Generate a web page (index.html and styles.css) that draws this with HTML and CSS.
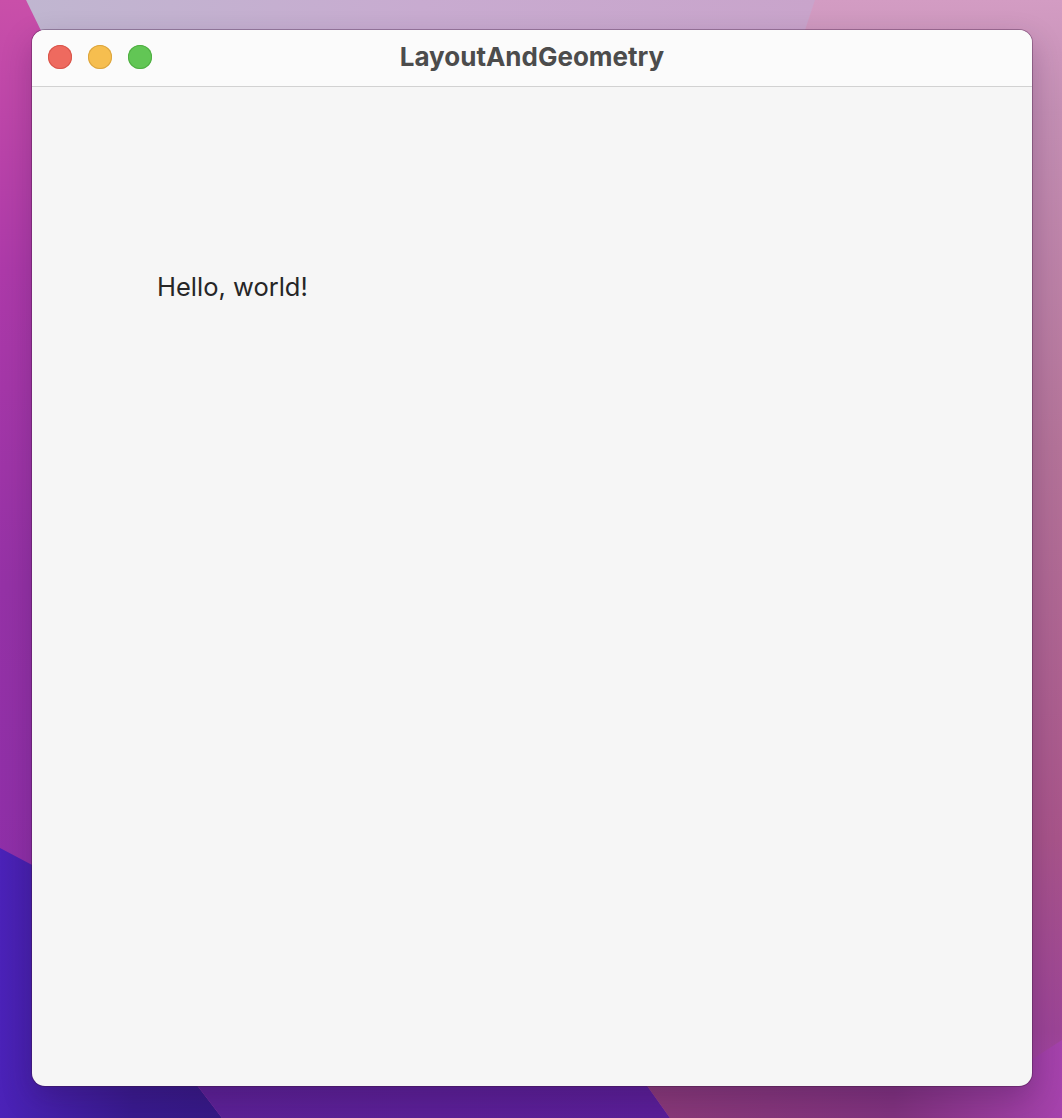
FILE: index.html
```html
<!DOCTYPE html>
<html lang="en">
<head>
<meta charset="utf-8">
<title>LayoutAndGeometry</title>
<link rel="stylesheet" href="styles.css">
</head>
<body>
<div class="desktop">
  <svg class="wallpaper" viewBox="0 0 1062 1118" width="1062" height="1118" aria-hidden="true">
    <defs>
      <linearGradient id="gBase" x1="0" y1="0" x2="0" y2="1">
        <stop offset="0" stop-color="#d39cc3"/>
        <stop offset="0.1" stop-color="#c48fb4"/>
        <stop offset="0.4" stop-color="#b47399"/>
        <stop offset="0.75" stop-color="#a8548a"/>
        <stop offset="0.92" stop-color="#9c4496"/>
        <stop offset="1" stop-color="#a642ab"/>
      </linearGradient>
      <linearGradient id="gTop" x1="0" y1="0" x2="1" y2="0">
        <stop offset="0" stop-color="#c0b6d0"/>
        <stop offset="0.5" stop-color="#c8abd0"/>
        <stop offset="1" stop-color="#c9a4cb"/>
      </linearGradient>
      <linearGradient id="gLeft" x1="0" y1="0" x2="0" y2="1">
        <stop offset="0" stop-color="#c94fa9"/>
        <stop offset="0.3" stop-color="#ad3aa9"/>
        <stop offset="0.65" stop-color="#9532a6"/>
        <stop offset="1" stop-color="#8e2fa8"/>
      </linearGradient>
      <linearGradient id="gIndigo" x1="0" y1="0" x2="1" y2="0">
        <stop offset="0" stop-color="#4b22b8"/>
        <stop offset="0.6" stop-color="#381a8e"/>
        <stop offset="1" stop-color="#351985"/>
      </linearGradient>
      <linearGradient id="gMid" x1="0" y1="0" x2="1" y2="0">
        <stop offset="0" stop-color="#5c2196"/>
        <stop offset="1" stop-color="#5a1e98"/>
      </linearGradient>
      <linearGradient id="gRightBottom" x1="0" y1="0" x2="1" y2="0">
        <stop offset="0" stop-color="#8a3a78"/>
        <stop offset="0.6" stop-color="#80327e"/>
        <stop offset="1" stop-color="#a542ac"/>
      </linearGradient>
    </defs>
    <rect x="0" y="0" width="1062" height="1118" fill="url(#gBase)"/>
    <polygon points="26,0 815,0 795,60 50,60" fill="url(#gTop)"/>
    <polygon points="0,0 26,0 70,90 70,900 0,850" fill="url(#gLeft)"/>
    <polygon points="0,848 70,885 70,1080 193,1080 222,1118 0,1118" fill="url(#gIndigo)"/>
    <polygon points="193,1080 643,1080 670,1118 222,1118" fill="url(#gMid)"/>
    <polygon points="643,1080 1000,1080 1062,1040 1062,1118 670,1118" fill="url(#gRightBottom)"/>
  </svg>
  <div class="window">
    <header class="titlebar">
      <div class="lights">
        <span class="light close"></span>
        <span class="light minimize"></span>
        <span class="light zoom"></span>
      </div>
      <h1 class="title">LayoutAndGeometry</h1>
    </header>
    <main class="content">
      <p class="hello">Hello, world!</p>
    </main>
  </div>
</div>
</body>
</html>
```

FILE: styles.css
```css
* { box-sizing: border-box; }
html, body { margin: 0; padding: 0; }
body {
  width: 1062px;
  height: 1118px;
  overflow: hidden;
  font-family: Inter, "Noto Sans", "Liberation Sans", sans-serif;
}
.desktop {
  display: grid;
  width: 1062px;
  height: 1118px;
}
.wallpaper {
  grid-area: 1 / 1;
  display: block;
}
.window {
  grid-area: 1 / 1;
  margin: 30px 0 0 32px;
  width: 1000px;
  height: 1056px;
  border-radius: 13px;
  background: #f6f6f6;
  overflow: hidden;
  display: flex;
  flex-direction: column;
  box-shadow: 0 0 0 1px rgba(60, 20, 60, 0.35), 0 12px 30px rgba(40, 10, 60, 0.25);
}
.titlebar {
  display: grid;
  grid-template-columns: 1fr;
  align-items: center;
  height: 57px;
  background: #fbfbfb;
  border-bottom: 1px solid #d2d2d2;
}
.lights {
  grid-area: 1 / 1;
  display: flex;
  gap: 16px;
  padding-left: 16px;
  margin-top: -2px;
}
.light {
  width: 24px;
  height: 24px;
  border-radius: 50%;
  display: block;
}
.close { background: #ee6a5f; box-shadow: inset 0 0 0 1px #d8554b; }
.minimize { background: #f6be4f; box-shadow: inset 0 0 0 1px #dba53f; }
.zoom { background: #62c655; box-shadow: inset 0 0 0 1px #4fae42; }
.title {
  grid-area: 1 / 1;
  margin: 0;
  text-align: center;
  font-size: 26px;
  font-weight: 700;
  color: #4c4c4c;
  line-height: 30px;
  margin-top: -2px;
}
.content {
  flex: 1;
  padding: 184px 0 0 125px;
}
.hello {
  margin: 0;
  font-size: 25.5px;
  line-height: 32px;
  color: #262626;
}
```
